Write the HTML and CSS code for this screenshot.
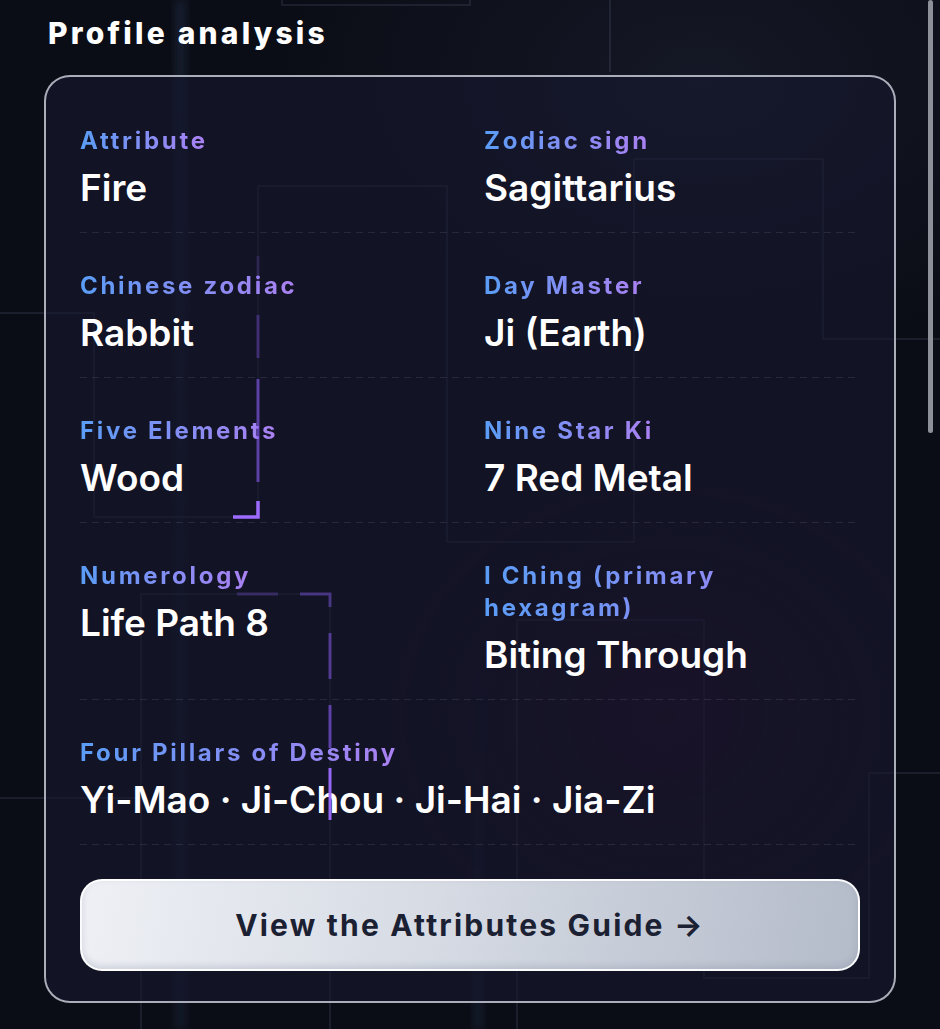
FILE: index.html
```html
<!DOCTYPE html>
<html lang="en">
<head>
<meta charset="utf-8">
<title>Profile analysis</title>
<link rel="stylesheet" href="styles.css">
</head>
<body>
<svg class="backdrop" width="940" height="1029" viewBox="0 0 940 1029" aria-hidden="true">
  <defs>
    <filter id="blur" x="-50%" y="-50%" width="200%" height="200%"><feGaussianBlur stdDeviation="4"/></filter>
    <filter id="blur2" x="-50%" y="-50%" width="200%" height="200%"><feGaussianBlur stdDeviation="1.5"/></filter>
    <linearGradient id="colA" x1="0" y1="0" x2="0" y2="1">
      <stop offset="0" stop-color="#34507a" stop-opacity="0.3"/>
      <stop offset="0.5" stop-color="#34507a" stop-opacity="0.12"/>
      <stop offset="1" stop-color="#34507a" stop-opacity="0.22"/>
    </linearGradient>
    <linearGradient id="colB" x1="0" y1="0" x2="0" y2="1">
      <stop offset="0" stop-color="#34507a" stop-opacity="0"/>
      <stop offset="1" stop-color="#34507a" stop-opacity="0.25"/>
    </linearGradient>
  </defs>
  <rect x="176" y="0" width="9" height="1029" fill="url(#colA)" filter="url(#blur)"/>
  <rect x="474" y="640" width="8" height="389" fill="url(#colB)" filter="url(#blur)"/>
  <path d="M775 22 H940" stroke="#6a7290" stroke-opacity="0.3" stroke-width="4" filter="url(#blur2)"/>
  <path d="M0 967 H180" stroke="#6a7290" stroke-opacity="0.2" stroke-width="4" filter="url(#blur2)"/>
  <g fill="none" stroke="#7f89ad" stroke-opacity="0.2" stroke-width="1.5">
    <path d="M282 0 V5 H470 V0"/>
    <path d="M610 0 V72"/>
    <path d="M0 313 H94 V517 H258 V186 H447 V542 H634 V159 H823 V339 H940"/>
    <path d="M141 1029 V594 H330 V1029"/>
    <path d="M0 798 H141"/>
    <path d="M517 1029 V620 H704 V978 H869 V773 H940"/>
  </g>
</svg>

<svg class="pulses" width="940" height="1029" viewBox="0 0 940 1029" aria-hidden="true">
  <g fill="none" stroke="#8b5cf6" stroke-width="3">
    <path d="M258 256 V289" stroke-opacity="0.18"/>
    <path d="M258 315 V358" stroke-opacity="0.35"/>
    <path d="M258 379 V482" stroke-opacity="0.6"/>
    <path d="M258 501 V517 H233" stroke="#9d6cff" stroke-width="3.5"/>
    <path d="M237 594 H278" stroke-opacity="0.28"/>
    <path d="M300 594 H330 V607" stroke-opacity="0.42"/>
    <path d="M330 633 V679" stroke-opacity="0.5"/>
    <path d="M330 705 V748" stroke-opacity="0.6"/>
    <path d="M330 768 V820" stroke="#9d6cff" stroke-opacity="0.95"/>
  </g>
</svg>

<div class="scrollbar" aria-hidden="true"></div>

<main class="page">
  <h1 class="title">Profile analysis</h1>
  <section class="card">
    <div class="rows">
      <div class="row">
        <div class="cell"><span class="label">Attribute</span><div class="value">Fire</div></div>
        <div class="cell"><span class="label">Zodiac sign</span><div class="value">Sagittarius</div></div>
      </div>
      <div class="row">
        <div class="cell"><span class="label">Chinese zodiac</span><div class="value">Rabbit</div></div>
        <div class="cell"><span class="label">Day Master</span><div class="value">Ji (Earth)</div></div>
      </div>
      <div class="row">
        <div class="cell"><span class="label">Five Elements</span><div class="value">Wood</div></div>
        <div class="cell"><span class="label">Nine Star Ki</span><div class="value">7 Red Metal</div></div>
      </div>
      <div class="row">
        <div class="cell"><span class="label">Numerology</span><div class="value">Life Path 8</div></div>
        <div class="cell"><span class="label">I Ching (primary hexagram)</span><div class="value">Biting Through</div></div>
      </div>
      <div class="row row-wide">
        <div class="cell"><span class="label">Four Pillars of Destiny</span><div class="value">Yi-Mao · Ji-Chou · Ji-Hai · Jia-Zi</div></div>
      </div>
    </div>
    <button class="guide-btn" type="button">View the Attributes Guide →</button>
  </section>
</main>
</body>
</html>
```

FILE: styles.css
```css
* { box-sizing: border-box; }

html, body {
  margin: 0;
  padding: 0;
}

body {
  width: 940px;
  height: 1029px;
  overflow: hidden;
  position: relative;
  background:
    radial-gradient(ellipse 600px 400px at 700px 80px, rgba(30, 34, 52, 0.5), transparent 70%),
    #0b0d16;
  font-family: Inter, "Noto Sans", "Liberation Sans", sans-serif;
  color: #ffffff;
}

.backdrop {
  position: absolute;
  left: 0;
  top: 0;
  z-index: 0;
}

.pulses {
  position: absolute;
  left: 0;
  top: 0;
  z-index: 2;
  pointer-events: none;
}

.scrollbar {
  position: absolute;
  right: 7px;
  top: 0;
  width: 5px;
  height: 433px;
  border-radius: 3px;
  background: #8d9099;
  z-index: 3;
}

.page {
  position: relative;
  z-index: 1;
  padding: 15px 0 0 44px;
}

.title {
  margin: 0 0 24px 4px;
  font-size: 30px;
  line-height: 36px;
  font-weight: 800;
  letter-spacing: 3.2px;
  color: #ffffff;
}

.card {
  width: 852px;
  border: 2px solid rgba(214, 218, 228, 0.78);
  border-radius: 26px;
  padding: 12px 34px 30px;
  background:
    radial-gradient(ellipse 420px 360px at 620px 640px, rgba(40, 18, 48, 0.3), transparent 70%),
    rgba(22, 25, 46, 0.62);
}

.rows {
  display: flex;
  flex-direction: column;
}

.row {
  display: grid;
  grid-template-columns: 1fr 1fr;
  column-gap: 28px;
  padding: 36px 0 24px;
  background: repeating-linear-gradient(90deg, rgba(255, 255, 255, 0.09) 0 7px, transparent 7px 12px) left bottom / calc(100% - 2px) 1px no-repeat;
  border-bottom: 1px solid transparent;
}

.row-wide {
  grid-template-columns: 1fr;
}

.cell {
  display: flex;
  flex-direction: column;
  align-items: flex-start;
  gap: 9px;
}

.label {
  display: inline-block;
  font-size: 24px;
  line-height: 32px;
  font-weight: 700;
  letter-spacing: 2.7px;
  background: linear-gradient(90deg, #5a9df6, #ab80f2);
  -webkit-background-clip: text;
  background-clip: text;
  color: transparent;
}

.value {
  font-size: 37px;
  line-height: 43px;
  font-weight: 600;
  color: #ffffff;
}

.guide-btn {
  display: block;
  width: 100%;
  height: 92px;
  margin-top: 33px;
  border: 2px solid rgba(255, 255, 255, 0.92);
  border-radius: 22px;
  background: linear-gradient(100deg, #eef0f5 0%, #d6dbe4 45%, #b4bbc9 100%);
  box-shadow: inset 0 -3px 6px rgba(120, 128, 150, 0.25);
  font-family: Inter, "Noto Sans", "Liberation Sans", sans-serif;
  font-size: 30px;
  font-weight: 700;
  letter-spacing: 2.2px;
  color: #1b2132;
  cursor: pointer;
}
```
